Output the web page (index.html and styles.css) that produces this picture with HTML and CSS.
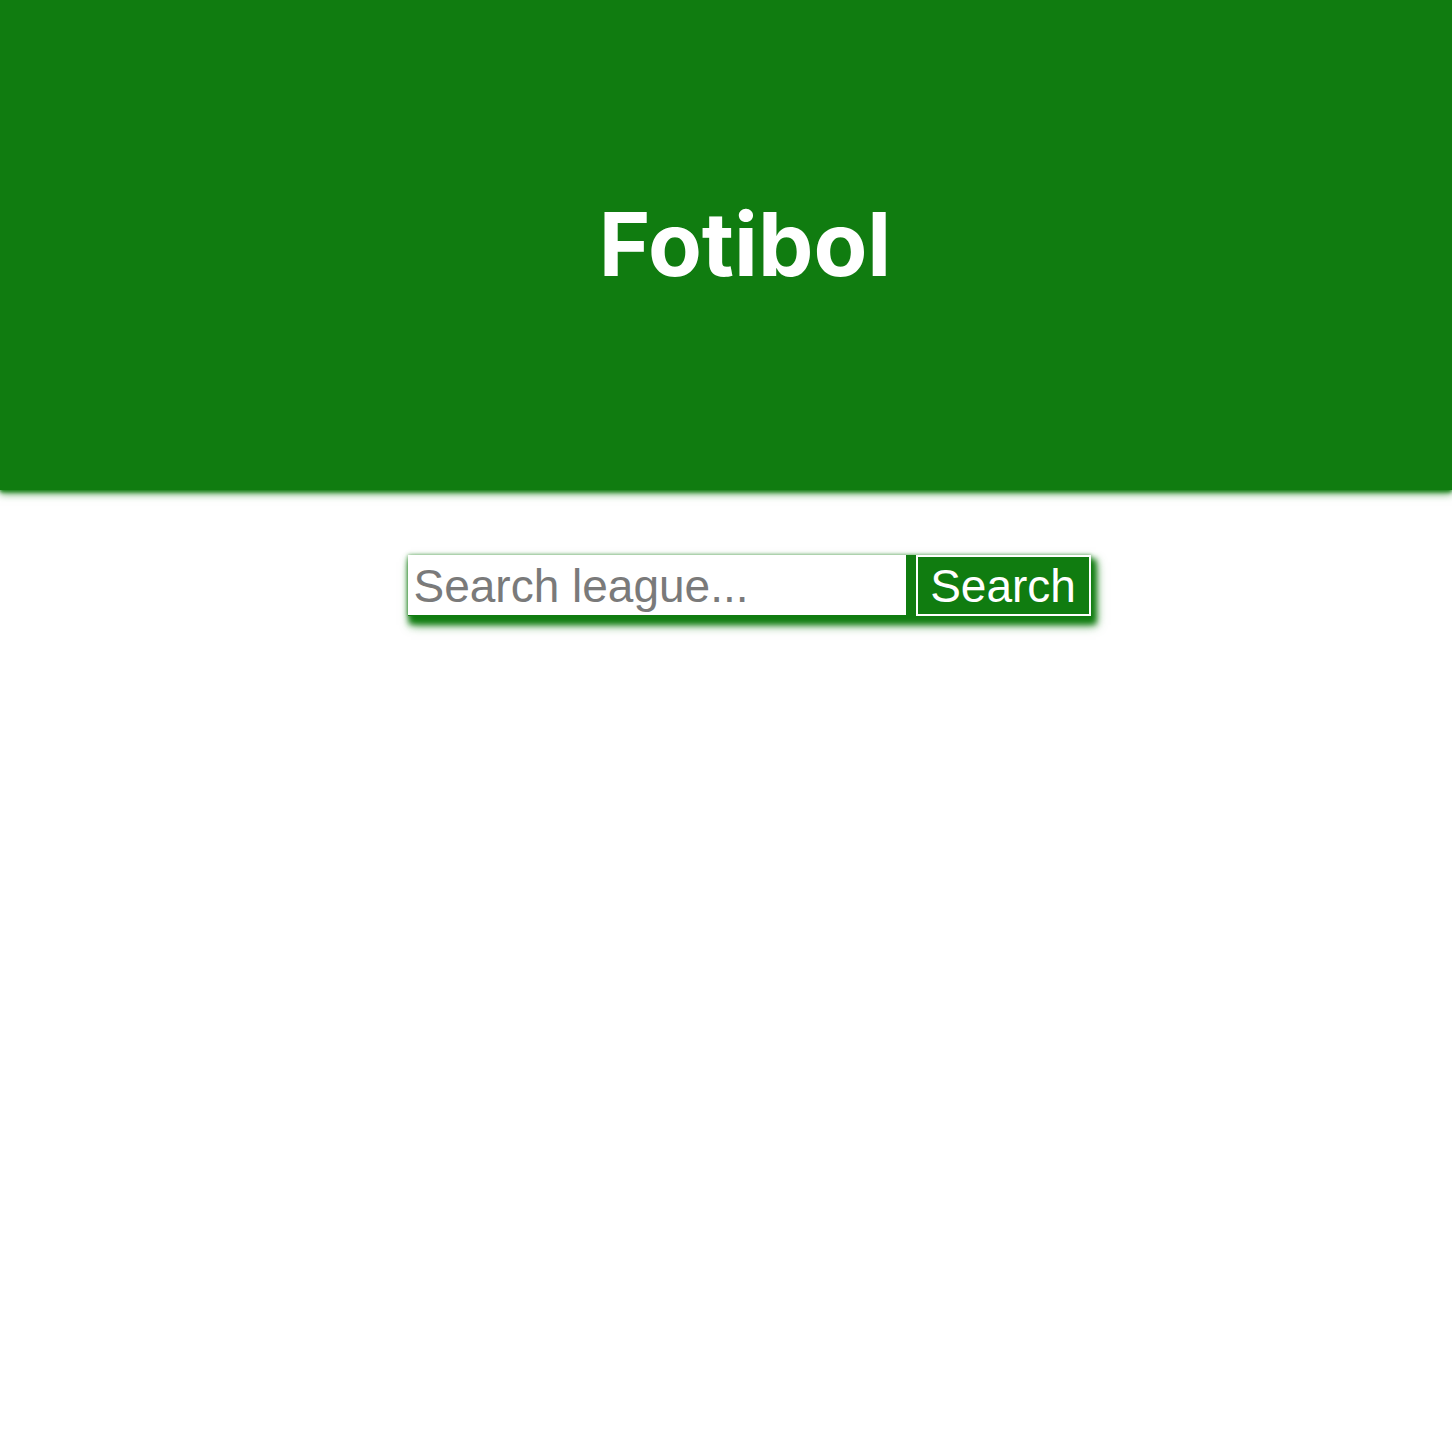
FILE: index.html
```html
<!DOCTYPE html>
<html lang="en">
<head>
<meta charset="utf-8">
<title>Fotibol</title>
<link rel="stylesheet" href="styles.css">
</head>
<body>
<header class="hero">
  <h1 class="hero-title">Fotibol</h1>
</header>
<main class="main">
  <form class="search-form">
    <input class="search-input" type="text" placeholder="Search league...">
    <button class="search-button" type="button">Search</button>
  </form>
</main>
</body>
</html>
```
FILE: styles.css
```css
html, body {
  margin: 0;
  padding: 0;
  background: #ffffff;
}

.hero {
  height: 490px;
  background: #107c10;
  box-shadow: 0 2px 4px #107c10, 0 4px 8px rgba(16, 124, 16, 0.6);
  display: flex;
  justify-content: center;
  padding-left: 38px;
  box-sizing: border-box;
  position: relative;
}

.hero-title {
  margin: 184px 0 0 0;
  font-family: Inter, "Noto Sans", sans-serif;
  font-weight: 700;
  font-size: 88px;
  line-height: 120px;
  color: #ffffff;
  height: 120px;
}

.main {
  display: flex;
  justify-content: center;
  padding: 65px 0 40px 46px;
}

.search-form {
  display: flex;
  align-items: flex-start;
  gap: 10px;
  margin: 0;
  background: #107c10;
  box-shadow: 3px 6px 6px 2px #107c10, 4px 8px 10px 1px rgba(16, 124, 16, 0.7), 0 0 4px rgba(16, 124, 16, 0.6);
}

.search-input {
  width: 498px;
  height: 60px;
  box-sizing: border-box;
  border: none;
  outline: none;
  padding: 2px 6px 0;
  margin: 0;
  font-family: "Liberation Sans", Arial, sans-serif;
  font-size: 46px;
  color: #222;
  background: #ffffff;
}

.search-input::placeholder {
  color: #7a7a7a;
}

.search-button {
  width: 175px;
  height: 61px;
  box-sizing: border-box;
  margin: 0;
  padding: 0;
  border: 2px solid #ffffff;
  background: #107c10;
  color: #ffffff;
  font-family: "Liberation Sans", Arial, sans-serif;
  font-size: 46px;
  cursor: pointer;
}
```
